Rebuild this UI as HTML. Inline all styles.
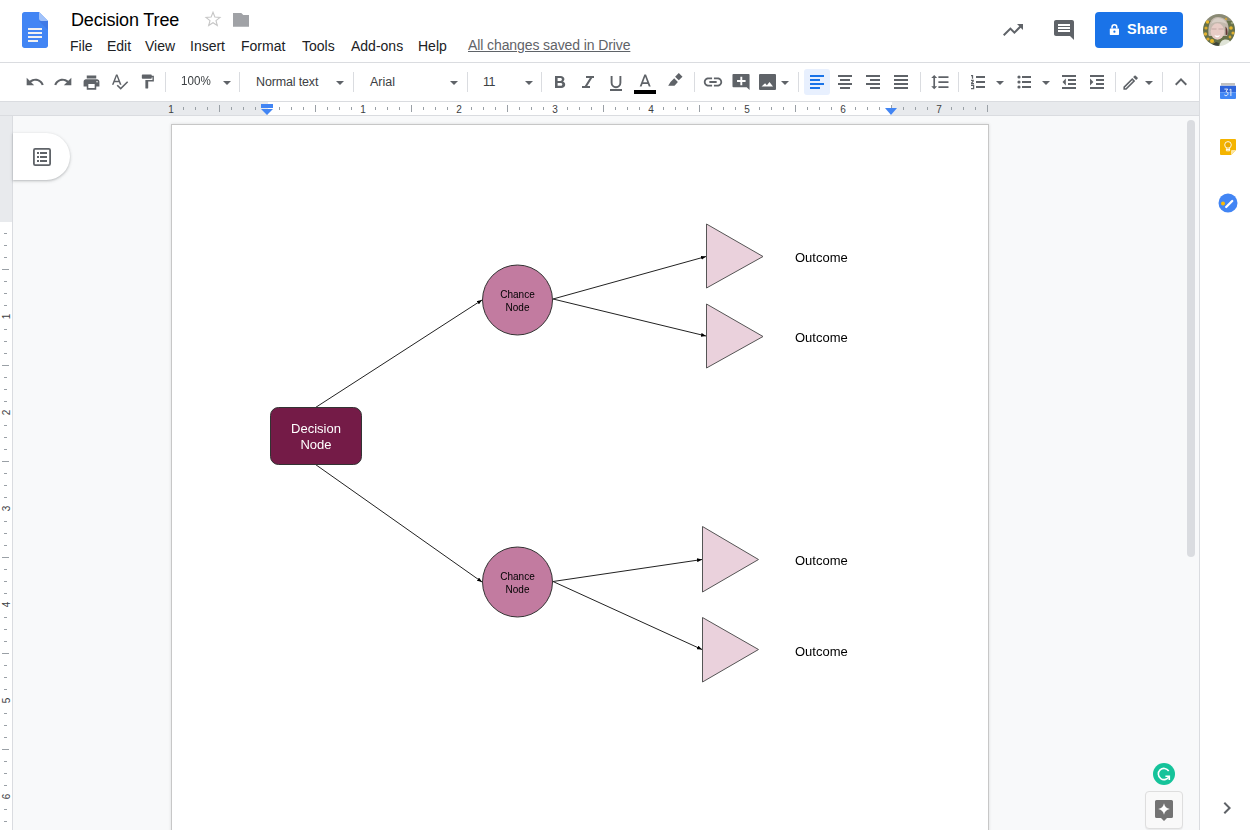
<!DOCTYPE html>
<html><head><meta charset="utf-8"><title>Decision Tree</title><style>
*{margin:0;padding:0;box-sizing:border-box}
html,body{width:1250px;height:830px;overflow:hidden;background:#fff;font-family:"Liberation Sans",sans-serif;color:#202124}
.a{position:absolute}
svg{display:block;position:absolute}
.hl{position:absolute;height:1px;background:#dadce0}
.menu{position:absolute;top:38px;font-size:14px;color:#202124;line-height:16px;white-space:nowrap}
.sep{position:absolute;top:72px;width:1px;height:20px;background:#dadce0}
.dd{position:absolute;top:81px;width:0;height:0;border-left:4px solid transparent;border-right:4px solid transparent;border-top:4px solid #5f6368}
.tb{position:absolute;top:74px;font-size:12.5px;color:#3c4043;line-height:14px;white-space:nowrap}
.rn{position:absolute;font-size:10px;color:#3c4043;line-height:11px;width:12px;text-align:center}
.tk{position:absolute;width:1px;background:#9aa0a6}
.vtk{position:absolute;height:1px;background:#9aa0a6}
.dg{position:absolute;white-space:nowrap;text-align:center;will-change:transform}
</style></head><body>
<div class="hl" style="left:0;top:62px;width:1250px"></div>
<svg style="left:22px;top:12px" width="26" height="36" viewBox="0 0 26 36">
<path fill="#4285f4" d="M2.5 0H17l9 9v24.5c0 1.4-1.1 2.5-2.5 2.5h-21C1.1 36 0 34.9 0 33.5v-31C0 1.1 1.1 0 2.5 0z"/>
<path fill="#a1c2fa" d="M17 0l9 9h-6.5C18.1 9 17 7.9 17 6.5z"/>
<path fill="#3d6fd8" opacity=".5" d="M17 9l9 9V9z"/>
<rect fill="#f1f1f1" x="6" y="16" width="14" height="2"/>
<rect fill="#f1f1f1" x="6" y="20" width="14" height="2"/>
<rect fill="#f1f1f1" x="6" y="24" width="14" height="2"/>
<rect fill="#f1f1f1" x="6" y="28" width="10" height="2"/>
</svg>
<div class="a" style="left:71px;top:9px;font-size:18px;line-height:22px;color:#000;letter-spacing:-0.15px;white-space:nowrap">Decision Tree</div>
<svg style="left:0;top:0" width="260" height="40" viewBox="0 0 260 40"><path fill="none" stroke="#c6c6c6" stroke-width="1.1" stroke-linejoin="miter" d="M213.00 12.20 L214.85 17.05 L220.0 17.36 L216.0 20.65 L217.3 25.5 L213.00 22.7 L208.7 25.5 L210.0 20.65 L206.0 17.36 L211.15 17.05Z"/><path fill="#a0a2a6" d="M233 13h8.3l2 2.1H249v11.7H233z"/></svg>
<div class="menu" style="left:70px">File</div>
<div class="menu" style="left:107px">Edit</div>
<div class="menu" style="left:145px">View</div>
<div class="menu" style="left:190px">Insert</div>
<div class="menu" style="left:241px">Format</div>
<div class="menu" style="left:302px">Tools</div>
<div class="menu" style="left:351px">Add-ons</div>
<div class="menu" style="left:418px">Help</div>
<div class="menu" style="left:468px;top:37px;color:#5f6368;text-decoration:underline;letter-spacing:-0.1px">All changes saved in Drive</div>
<svg style="left:1001px;top:18px" width="24" height="24" viewBox="0 0 24 24"><path fill="#5f6368" d="M16 6l2.29 2.29-4.88 4.88-4-4L2 16.59 3.41 18l6-6 4 4 6.3-6.29L22 12V6z"/></svg>
<svg style="left:1052px;top:18px" width="24" height="24" viewBox="0 0 24 24"><path fill="#5f6368" d="M21.99 4c0-1.1-.89-2-1.99-2H4c-1.1 0-2 .9-2 2v12c0 1.1.9 2 2 2h14l4 4-.01-18zM18 14H6v-2h12v2zm0-3H6V9h12v2zm0-3H6V6h12v2z"/></svg>
<div class="a" style="left:1095px;top:12px;width:88px;height:36px;background:#1a73e8;border-radius:4px"></div>
<svg style="left:1109px;top:23px" width="12" height="13" viewBox="0 0 12 13"><path fill="none" stroke="#fff" stroke-width="1.5" d="M3 5.6V4.2a2.4 2.4 0 0 1 4.8 0V5.6"/><path fill="#fff" d="M1.4 5.5h8a.6.6 0 0 1 .6.6v5.2a.6.6 0 0 1-.6.6h-8a.6.6 0 0 1-.6-.6V6.1a.6.6 0 0 1 .6-.6z"/><circle cx="5.4" cy="8.7" r="1.1" fill="#1a73e8"/></svg>
<div class="a" style="left:1127px;top:21px;font-size:14.5px;line-height:17px;font-weight:bold;color:#fff">Share</div>
<svg style="left:1203px;top:14px" width="32" height="32" viewBox="0 0 32 32">
<defs><clipPath id="cc"><circle cx="16" cy="16" r="16"/></clipPath><filter id="bl" x="-10%" y="-10%" width="120%" height="120%"><feGaussianBlur stdDeviation="0.7"/></filter></defs>
<g clip-path="url(#cc)"><g filter="url(#bl)">
<rect x="-2" y="-2" width="36" height="36" fill="#66704a"/>
<rect x="-2" y="-2" width="36" height="9" fill="#8a8a74"/>
<circle cx="4.5" cy="8" r="1.7" fill="#e7b52a"/><circle cx="3" cy="14" r="1.6" fill="#dba92a"/><circle cx="2.5" cy="20" r="1.7" fill="#e3b230"/>
<circle cx="5" cy="25" r="1.6" fill="#d9a82c"/><circle cx="9" cy="27" r="2" fill="#e9ba2c"/><circle cx="12" cy="29.5" r="1.5" fill="#d6a526"/>
<circle cx="28" cy="14" r="1.8" fill="#e6b52c"/><circle cx="30" cy="19" r="1.6" fill="#e0b030"/><circle cx="27" cy="23" r="1.4" fill="#d9a82a"/>
<circle cx="23" cy="5" r="1.3" fill="#caa040"/><circle cx="29" cy="9" r="1.3" fill="#9aa07a"/>
<path fill="#c4b9ae" d="M5.5 21C4.5 10 8 3 15 3s10.5 5 10.5 11c0 3-.5 6-1.5 8H6z"/>
<path fill="#d8cfc6" d="M8 10c1.5-4 4-6 7-6 4 0 7 2 9 6-3-1.5-6-2-9-2-2.5 0-5 .5-7 2z"/>
<ellipse cx="14.5" cy="17.5" rx="6.8" ry="8.3" fill="#e8ccc6"/>
<path fill="#b89e98" d="M8.5 14.5h5v.9h-5zM15.5 14.5h5v.9h-5z" opacity=".8"/>
<path fill="#fff" d="M11.5 21c1.5 1 4 1 5.5 0-.5 1.6-1.6 2.3-2.8 2.3s-2.2-.7-2.7-2.3z"/>
<path fill="#5e3630" d="M22.5 12.5c1.6 1 2.4 4.5 2 8l-1.8.8z"/>
<path fill="#dfe3d6" d="M16 34c.5-6 3-8.5 7-8.5s5.5 3 6 8.5z"/>
<path fill="#3e4438" d="M9 34c.5-4 2-6 4-6l3 1-1 5z"/>
</g></g></svg>
<div class="hl" style="left:0;top:101px;width:1250px"></div>
<svg style="left:25px;top:72px" width="20" height="20" viewBox="0 0 24 24"><path fill="#5f6368" d="M12.5 8c-2.65 0-5.05.99-6.9 2.6L2 7v9h9l-3.62-3.62c1.39-1.16 3.16-1.88 5.12-1.88 3.54 0 6.55 2.31 7.6 5.5l2.37-.78C21.08 11.03 17.15 8 12.5 8z"/></svg>
<svg style="left:53px;top:72px" width="20" height="20" viewBox="0 0 24 24"><path fill="#5f6368" d="M18.4 10.6C16.55 8.99 14.15 8 11.5 8c-4.65 0-8.58 3.03-9.96 7.22L3.9 16c1.05-3.19 4.05-5.5 7.6-5.5 1.95 0 3.73.72 5.12 1.88L13 16h9V7l-3.6 3.6z"/></svg>
<svg style="left:81.5px;top:72.5px" width="19" height="19" viewBox="0 0 24 24"><path fill="#5f6368" d="M19 8H5c-1.66 0-3 1.34-3 3v6h4v4h12v-4h4v-6c0-1.66-1.34-3-3-3zm-3 11H8v-5h8v5zm3-7c-.55 0-1-.45-1-1s.45-1 1-1 1 .45 1 1-.45 1-1 1zm-1-9H6v4h12V3z"/></svg>
<svg style="left:110px;top:72px" width="19" height="19" viewBox="0 0 24 24"><path fill="#5f6368" d="M12.45 16h2.09L9.43 3H7.57L2.46 16h2.09l1.12-3h5.64l1.14 3zm-6.02-5L8.5 5.48 10.57 11H6.43zm15.16.59l-8.09 8.09L9.83 16l-1.41 1.41 5.09 5.09L23 13l-1.41-1.41z"/></svg>
<svg style="left:139px;top:73px" width="17" height="17" viewBox="0 0 24 24"><path fill="#5f6368" d="M18 4V3c0-.55-.45-1-1-1H5c-.55 0-1 .45-1 1v4c0 .55.45 1 1 1h12c.55 0 1-.45 1-1V6h1v4H9v11c0 .55.45 1 1 1h2c.55 0 1-.45 1-1v-9h8V4h-3z"/></svg>
<div class="sep" style="left:165px"></div>
<div class="tb" style="left:181px;transform:scaleX(0.93);transform-origin:0 0">100%</div>
<div class="dd" style="left:223px"></div>
<div class="sep" style="left:239px"></div>
<div class="tb" style="left:256px;top:75px;letter-spacing:-0.15px">Normal text</div>
<div class="dd" style="left:336px"></div>
<div class="sep" style="left:353px"></div>
<div class="tb" style="left:370px;top:75px">Arial</div>
<div class="dd" style="left:450px"></div>
<div class="sep" style="left:467px"></div>
<div class="tb" style="left:483px;top:75px;letter-spacing:-0.5px">11</div>
<div class="dd" style="left:525px"></div>
<div class="sep" style="left:541px"></div>
<svg style="left:555px;top:76px" width="11" height="12" viewBox="0 0 11 12"><path fill="#5f6368" fill-rule="evenodd" d="M0 0h5.6c2.2 0 3.8 1.4 3.8 3.1 0 1.1-.6 2-1.4 2.5 1.3.5 2.2 1.6 2.2 3.1 0 1.9-1.6 3.3-3.9 3.3H0zM2.6 2.1v2.8h2.8c.9 0 1.5-.6 1.5-1.4S6.3 2.1 5.4 2.1zM2.6 7v2.8h3.1c.9 0 1.6-.6 1.6-1.4S6.6 7 5.7 7z"/></svg>
<svg style="left:582px;top:76px" width="12" height="12" viewBox="0 0 12 12"><path fill="#5f6368" d="M4 0h8v2H4zM0 10h8v2H0zM7.8 2h2.4L5.2 10H2.8z"/></svg>
<svg style="left:610px;top:76px" width="12" height="15" viewBox="0 0 12 15"><path fill="none" stroke="#5f6368" stroke-width="1.9" d="M1.6 0V6.8a4.4 4.4 0 0 0 8.8 0V0"/><rect x="0" y="13" width="12" height="2" fill="#5f6368"/></svg>
<svg style="left:634.5px;top:71.5px" width="20.4" height="20.4" viewBox="0 0 24 24"><path fill="#5f6368" d="M11 3L5.5 17h2.25l1.12-3h6.25l1.12 3h2.25L13 3h-2zm-1.38 9L12 5.67 14.38 12H9.62z"/></svg>
<div class="a" style="left:634px;top:90px;width:22px;height:4px;background:#000"></div>
<svg style="left:664px;top:70px" width="24" height="20" viewBox="0 0 24 20"><path fill="#5f6368" d="M14.8 3.1L18.5 6.7L14.8 10.3L11.1 6.7ZM10.2 8.2L13.9 11.9L10.5 15.7L4.2 15.7L6.5 12Z"/></svg>
<div class="sep" style="left:694px"></div>
<svg style="left:702px;top:71px" width="22" height="22" viewBox="0 0 24 24"><path fill="#5f6368" d="M3.9 12c0-1.71 1.39-3.1 3.1-3.1h4V7H7c-2.76 0-5 2.24-5 5s2.24 5 5 5h4v-1.9H7c-1.71 0-3.1-1.39-3.1-3.1zM8 13h8v-2H8v2zm9-6h-4v1.9h4c1.71 0 3.1 1.39 3.1 3.1s-1.39 3.1-3.1 3.1h-4V17h4c2.76 0 5-2.24 5-5s-2.24-5-5-5z"/></svg>
<svg style="left:732px;top:72px" width="19" height="19" viewBox="0 0 20 20"><path fill="#5f6368" d="M1.5 2h16a1 1 0 0 1 1 1v16l-3-3h-14a1 1 0 0 1-1-1V3a1 1 0 0 1 1-1zM8.8 5v3.5H5.3v2h3.5V14h2v-3.5h3.5v-2h-3.5V5z"/></svg>
<svg style="left:759px;top:74px" width="18" height="16" viewBox="0 0 18 16"><path fill="#5f6368" d="M1 0h15a1 1 0 0 1 1 1v14a1 1 0 0 1-1 1H1a1 1 0 0 1-1-1V1a1 1 0 0 1 1-1zM2.5 12.5h11.5l-3.5-4.5-2.6 3.2-1.8-2z"/></svg>
<div class="dd" style="left:781px"></div>
<div class="sep" style="left:798px"></div>
<div class="a" style="left:804px;top:69px;width:26px;height:26px;background:#e8f0fe;border-radius:3px"></div>
<div class="a" style="left:810px;top:75px;width:14px;height:2px;background:#1a73e8"></div>
<div class="a" style="left:810px;top:79px;width:10px;height:2px;background:#1a73e8"></div>
<div class="a" style="left:810px;top:83px;width:14px;height:2px;background:#1a73e8"></div>
<div class="a" style="left:810px;top:87px;width:10px;height:2px;background:#1a73e8"></div>
<div class="a" style="left:838px;top:75px;width:14px;height:2px;background:#5f6368"></div>
<div class="a" style="left:840px;top:79px;width:10px;height:2px;background:#5f6368"></div>
<div class="a" style="left:838px;top:83px;width:14px;height:2px;background:#5f6368"></div>
<div class="a" style="left:840px;top:87px;width:10px;height:2px;background:#5f6368"></div>
<div class="a" style="left:866px;top:75px;width:14px;height:2px;background:#5f6368"></div>
<div class="a" style="left:870px;top:79px;width:10px;height:2px;background:#5f6368"></div>
<div class="a" style="left:866px;top:83px;width:14px;height:2px;background:#5f6368"></div>
<div class="a" style="left:870px;top:87px;width:10px;height:2px;background:#5f6368"></div>
<div class="a" style="left:894px;top:75px;width:14px;height:2px;background:#5f6368"></div>
<div class="a" style="left:894px;top:79px;width:14px;height:2px;background:#5f6368"></div>
<div class="a" style="left:894px;top:83px;width:14px;height:2px;background:#5f6368"></div>
<div class="a" style="left:894px;top:87px;width:14px;height:2px;background:#5f6368"></div>
<div class="sep" style="left:920px"></div>
<svg style="left:929.7px;top:71.9px" width="20.16" height="20.16" viewBox="0 0 24 24"><path fill="#5f6368" d="M6 7h2.5L5 3.5 1.5 7H4v10H1.5L5 20.5 8.5 17H6V7zm4-2v2h12V5H10zm0 14h12v-2H10v2zm0-6h12v-2H10v2z"/></svg>
<div class="sep" style="left:958px"></div>
<div class="a" style="left:976px;top:76px;width:9px;height:2px;background:#5f6368"></div><div class="a" style="left:976px;top:81px;width:9px;height:2px;background:#5f6368"></div><div class="a" style="left:976px;top:86px;width:9px;height:2px;background:#5f6368"></div>
<svg style="left:970px;top:74px" width="6" height="16" viewBox="0 0 6 16"><path fill="none" stroke="#5f6368" stroke-width="1.25" d="M1 1.5h1.9M2.5 1.1V4.8M1 6.4h2.8M3.4 6.8L1.5 9.2M1 9.6h3M1 11.4h3.2M3.6 10.8v4.3M1 14.5h3.2"/></svg>
<div class="dd" style="left:996px"></div>
<div class="a" style="left:1022px;top:76px;width:9px;height:2px;background:#5f6368"></div><div class="a" style="left:1022px;top:81px;width:9px;height:2px;background:#5f6368"></div><div class="a" style="left:1022px;top:86px;width:9px;height:2px;background:#5f6368"></div>
<svg style="left:1016px;top:74px" width="6" height="16" viewBox="0 0 6 16"><circle cx="3" cy="3" r="1.6" fill="#5f6368"/><circle cx="3" cy="8" r="1.6" fill="#5f6368"/><circle cx="3" cy="13" r="1.6" fill="#5f6368"/></svg>
<div class="dd" style="left:1042px"></div>
<div class="a" style="left:1062px;top:75px;width:14px;height:2px;background:#5f6368"></div><div class="a" style="left:1068px;top:79px;width:8px;height:2px;background:#5f6368"></div><div class="a" style="left:1068px;top:83px;width:8px;height:2px;background:#5f6368"></div><div class="a" style="left:1062px;top:87px;width:14px;height:2px;background:#5f6368"></div>
<svg style="left:1062px;top:78px" width="5" height="8" viewBox="0 0 5 8"><path fill="#5f6368" d="M0.5 4L3.8 0.6V7.4z"/></svg>
<div class="a" style="left:1090px;top:75px;width:14px;height:2px;background:#5f6368"></div><div class="a" style="left:1096px;top:79px;width:8px;height:2px;background:#5f6368"></div><div class="a" style="left:1096px;top:83px;width:8px;height:2px;background:#5f6368"></div><div class="a" style="left:1090px;top:87px;width:14px;height:2px;background:#5f6368"></div>
<svg style="left:1090px;top:78px" width="5" height="8" viewBox="0 0 5 8"><path fill="#5f6368" d="M0 0.6L3.4 4L0 7.4z"/></svg>
<div class="sep" style="left:1115px"></div>
<svg style="left:1121.4px;top:72.6px" width="19.2" height="19.2" viewBox="0 0 24 24"><path fill="#5f6368" d="M14.06 9.02l.92.92L5.92 19H5v-.92l9.06-9.06M17.66 3c-.25 0-.51.1-.7.29l-1.83 1.83 3.75 3.75 1.83-1.83c.39-.39.39-1.02 0-1.41l-2.34-2.34c-.2-.2-.45-.29-.71-.29zm-3.6 3.19L3 17.25V21h3.75L17.81 9.94l-3.75-3.75z"/></svg>
<div class="dd" style="left:1145px"></div>
<div class="sep" style="left:1162px"></div>
<svg style="left:1169px;top:70px" width="24" height="24" viewBox="0 0 24 24"><path fill="#5f6368" d="M12 8l-6 6 1.41 1.41L12 10.83l4.59 4.58L18 14z"/></svg>
<div class="a" style="left:0;top:102px;width:1199px;height:13px;background:#e8eaed"></div>
<div class="a" style="left:268px;top:102px;width:624px;height:13px;background:#fff"></div>
<div class="hl" style="left:0;top:115px;width:1199px"></div>
<div class="a" style="left:13px;top:116px;width:1186px;height:714px;background:#f8f9fa"></div>
<div class="a" style="left:0;top:116px;width:12px;height:106px;background:#e8eaed"></div>
<div class="a" style="left:0;top:222px;width:12px;height:608px;background:#fff"></div>
<div class="a" style="left:12px;top:116px;width:1px;height:714px;background:#dadce0"></div>
<div class="rn" style="left:165px;top:104px">1</div>
<div class="tk" style="left:183px;top:107px;height:3px"></div>
<div class="tk" style="left:195px;top:107px;height:3px"></div>
<div class="tk" style="left:207px;top:107px;height:3px"></div>
<div class="tk" style="left:219px;top:105px;height:7px"></div>
<div class="tk" style="left:231px;top:107px;height:3px"></div>
<div class="tk" style="left:243px;top:107px;height:3px"></div>
<div class="tk" style="left:255px;top:107px;height:3px"></div>
<div class="tk" style="left:279px;top:107px;height:3px"></div>
<div class="tk" style="left:291px;top:107px;height:3px"></div>
<div class="tk" style="left:303px;top:107px;height:3px"></div>
<div class="tk" style="left:315px;top:105px;height:7px"></div>
<div class="tk" style="left:327px;top:107px;height:3px"></div>
<div class="tk" style="left:339px;top:107px;height:3px"></div>
<div class="tk" style="left:351px;top:107px;height:3px"></div>
<div class="rn" style="left:357px;top:104px">1</div>
<div class="tk" style="left:375px;top:107px;height:3px"></div>
<div class="tk" style="left:387px;top:107px;height:3px"></div>
<div class="tk" style="left:399px;top:107px;height:3px"></div>
<div class="tk" style="left:411px;top:105px;height:7px"></div>
<div class="tk" style="left:423px;top:107px;height:3px"></div>
<div class="tk" style="left:435px;top:107px;height:3px"></div>
<div class="tk" style="left:447px;top:107px;height:3px"></div>
<div class="rn" style="left:453px;top:104px">2</div>
<div class="tk" style="left:471px;top:107px;height:3px"></div>
<div class="tk" style="left:483px;top:107px;height:3px"></div>
<div class="tk" style="left:495px;top:107px;height:3px"></div>
<div class="tk" style="left:507px;top:105px;height:7px"></div>
<div class="tk" style="left:519px;top:107px;height:3px"></div>
<div class="tk" style="left:531px;top:107px;height:3px"></div>
<div class="tk" style="left:543px;top:107px;height:3px"></div>
<div class="rn" style="left:549px;top:104px">3</div>
<div class="tk" style="left:567px;top:107px;height:3px"></div>
<div class="tk" style="left:579px;top:107px;height:3px"></div>
<div class="tk" style="left:591px;top:107px;height:3px"></div>
<div class="tk" style="left:603px;top:105px;height:7px"></div>
<div class="tk" style="left:615px;top:107px;height:3px"></div>
<div class="tk" style="left:627px;top:107px;height:3px"></div>
<div class="tk" style="left:639px;top:107px;height:3px"></div>
<div class="rn" style="left:645px;top:104px">4</div>
<div class="tk" style="left:663px;top:107px;height:3px"></div>
<div class="tk" style="left:675px;top:107px;height:3px"></div>
<div class="tk" style="left:687px;top:107px;height:3px"></div>
<div class="tk" style="left:699px;top:105px;height:7px"></div>
<div class="tk" style="left:711px;top:107px;height:3px"></div>
<div class="tk" style="left:723px;top:107px;height:3px"></div>
<div class="tk" style="left:735px;top:107px;height:3px"></div>
<div class="rn" style="left:741px;top:104px">5</div>
<div class="tk" style="left:759px;top:107px;height:3px"></div>
<div class="tk" style="left:771px;top:107px;height:3px"></div>
<div class="tk" style="left:783px;top:107px;height:3px"></div>
<div class="tk" style="left:795px;top:105px;height:7px"></div>
<div class="tk" style="left:807px;top:107px;height:3px"></div>
<div class="tk" style="left:819px;top:107px;height:3px"></div>
<div class="tk" style="left:831px;top:107px;height:3px"></div>
<div class="rn" style="left:837px;top:104px">6</div>
<div class="tk" style="left:855px;top:107px;height:3px"></div>
<div class="tk" style="left:867px;top:107px;height:3px"></div>
<div class="tk" style="left:879px;top:107px;height:3px"></div>
<div class="tk" style="left:891px;top:105px;height:7px"></div>
<div class="tk" style="left:903px;top:107px;height:3px"></div>
<div class="tk" style="left:915px;top:107px;height:3px"></div>
<div class="tk" style="left:927px;top:107px;height:3px"></div>
<div class="rn" style="left:933px;top:104px">7</div>
<div class="tk" style="left:951px;top:107px;height:3px"></div>
<div class="tk" style="left:963px;top:107px;height:3px"></div>
<div class="tk" style="left:975px;top:107px;height:3px"></div>
<div class="tk" style="left:987px;top:105px;height:7px"></div>
<div class="a" style="left:261px;top:104px;width:12px;height:4px;background:#4285f4"></div>
<svg style="left:261px;top:109px" width="12" height="6" viewBox="0 0 12 6"><path fill="#4285f4" d="M0 0h12L6 6z"/></svg>
<svg style="left:885px;top:108px" width="12" height="7" viewBox="0 0 12 7"><path fill="#4285f4" d="M0 0h12L6 7z"/></svg>
<div class="vtk" style="left:4px;top:233px;width:3px"></div>
<div class="vtk" style="left:4px;top:245px;width:3px"></div>
<div class="vtk" style="left:4px;top:257px;width:3px"></div>
<div class="vtk" style="left:2px;top:269px;width:7px"></div>
<div class="vtk" style="left:4px;top:281px;width:3px"></div>
<div class="vtk" style="left:4px;top:293px;width:3px"></div>
<div class="vtk" style="left:4px;top:305px;width:3px"></div>
<div class="rn" style="left:0px;top:311px;transform:rotate(-90deg)">1</div>
<div class="vtk" style="left:4px;top:329px;width:3px"></div>
<div class="vtk" style="left:4px;top:341px;width:3px"></div>
<div class="vtk" style="left:4px;top:353px;width:3px"></div>
<div class="vtk" style="left:2px;top:365px;width:7px"></div>
<div class="vtk" style="left:4px;top:377px;width:3px"></div>
<div class="vtk" style="left:4px;top:389px;width:3px"></div>
<div class="vtk" style="left:4px;top:401px;width:3px"></div>
<div class="rn" style="left:0px;top:407px;transform:rotate(-90deg)">2</div>
<div class="vtk" style="left:4px;top:425px;width:3px"></div>
<div class="vtk" style="left:4px;top:437px;width:3px"></div>
<div class="vtk" style="left:4px;top:449px;width:3px"></div>
<div class="vtk" style="left:2px;top:461px;width:7px"></div>
<div class="vtk" style="left:4px;top:473px;width:3px"></div>
<div class="vtk" style="left:4px;top:485px;width:3px"></div>
<div class="vtk" style="left:4px;top:497px;width:3px"></div>
<div class="rn" style="left:0px;top:503px;transform:rotate(-90deg)">3</div>
<div class="vtk" style="left:4px;top:521px;width:3px"></div>
<div class="vtk" style="left:4px;top:533px;width:3px"></div>
<div class="vtk" style="left:4px;top:545px;width:3px"></div>
<div class="vtk" style="left:2px;top:557px;width:7px"></div>
<div class="vtk" style="left:4px;top:569px;width:3px"></div>
<div class="vtk" style="left:4px;top:581px;width:3px"></div>
<div class="vtk" style="left:4px;top:593px;width:3px"></div>
<div class="rn" style="left:0px;top:599px;transform:rotate(-90deg)">4</div>
<div class="vtk" style="left:4px;top:617px;width:3px"></div>
<div class="vtk" style="left:4px;top:629px;width:3px"></div>
<div class="vtk" style="left:4px;top:641px;width:3px"></div>
<div class="vtk" style="left:2px;top:653px;width:7px"></div>
<div class="vtk" style="left:4px;top:665px;width:3px"></div>
<div class="vtk" style="left:4px;top:677px;width:3px"></div>
<div class="vtk" style="left:4px;top:689px;width:3px"></div>
<div class="rn" style="left:0px;top:695px;transform:rotate(-90deg)">5</div>
<div class="vtk" style="left:4px;top:713px;width:3px"></div>
<div class="vtk" style="left:4px;top:725px;width:3px"></div>
<div class="vtk" style="left:4px;top:737px;width:3px"></div>
<div class="vtk" style="left:2px;top:749px;width:7px"></div>
<div class="vtk" style="left:4px;top:761px;width:3px"></div>
<div class="vtk" style="left:4px;top:773px;width:3px"></div>
<div class="vtk" style="left:4px;top:785px;width:3px"></div>
<div class="rn" style="left:0px;top:791px;transform:rotate(-90deg)">6</div>
<div class="vtk" style="left:4px;top:809px;width:3px"></div>
<div class="vtk" style="left:4px;top:821px;width:3px"></div>
<div class="a" style="left:13px;top:133px;width:57px;height:47px;background:#fff;border-radius:0 24px 24px 0;box-shadow:0 1px 2px rgba(60,64,67,.22),0 1px 3px 1px rgba(60,64,67,.1)"></div>
<svg style="left:30px;top:145px" width="24" height="24" viewBox="0 0 24 24"><rect x="3.9" y="3.9" width="16.2" height="16.2" rx="1.3" fill="none" stroke="#5f6368" stroke-width="1.8"/><path fill="#5f6368" d="M7 7h2v2H7zM7 11h2v2H7zM7 15h2v2H7zM10 7h7v2h-7zM10 11h7v2h-7zM10 15h7v2h-7z"/></svg>
<div class="a" style="left:171px;top:124px;width:818px;height:720px;background:#fff;border:1px solid #c7c7c7;box-shadow:0 0 3px rgba(0,0,0,.12)"></div>
<svg style="left:0;top:0" width="1250" height="830" viewBox="0 0 1250 830">
<defs><marker id="ar" markerWidth="5" markerHeight="4" refX="5" refY="2" orient="auto" markerUnits="userSpaceOnUse"><path d="M0 0L5 2L0 4z" fill="#000"/></marker></defs>
<g stroke="#222" stroke-width="1" fill="none">
<line x1="315.5" y1="407.5" x2="482" y2="300" marker-end="url(#ar)"/>
<line x1="315.5" y1="464.5" x2="482" y2="582" marker-end="url(#ar)"/>
<line x1="553" y1="299" x2="706" y2="256.5" marker-end="url(#ar)"/>
<line x1="553" y1="299" x2="706" y2="336" marker-end="url(#ar)"/>
<line x1="553" y1="581.5" x2="702" y2="559.5" marker-end="url(#ar)"/>
<line x1="553" y1="581.5" x2="702" y2="649.5" marker-end="url(#ar)"/>
</g>
<rect x="270.5" y="407.5" width="91" height="57" rx="8" fill="#741b47" stroke="#333" stroke-width="1"/>
<circle cx="517.5" cy="300" r="35" fill="#c27ba0" stroke="#333" stroke-width="1"/>
<circle cx="517.5" cy="582" r="35" fill="#c27ba0" stroke="#333" stroke-width="1"/>
<path d="M706.5 224L763 256.5L706.5 288z" fill="#ead1dc" stroke="#555" stroke-width="1"/>
<path d="M706.5 304L763 336.5L706.5 368z" fill="#ead1dc" stroke="#555" stroke-width="1"/>
<path d="M702.5 526.5L758.5 559.5L702.5 592z" fill="#ead1dc" stroke="#555" stroke-width="1"/>
<path d="M702.5 617.5L758.5 649.5L702.5 682z" fill="#ead1dc" stroke="#555" stroke-width="1"/>
</svg>
<div class="dg" style="left:270px;top:421px;width:92px;font-size:13px;line-height:15.5px;color:#fff">Decision<br>Node</div>
<div class="dg" style="left:482px;top:289px;width:71px;font-size:10px;line-height:12.5px;color:#000">Chance<br>Node</div>
<div class="dg" style="left:482px;top:571px;width:71px;font-size:10px;line-height:12.5px;color:#000">Chance<br>Node</div>
<div class="dg" style="left:795px;top:250px;font-size:13px;line-height:15px;color:#000">Outcome</div>
<div class="dg" style="left:795px;top:330px;font-size:13px;line-height:15px;color:#000">Outcome</div>
<div class="dg" style="left:795px;top:553px;font-size:13px;line-height:15px;color:#000">Outcome</div>
<div class="dg" style="left:795px;top:644px;font-size:13px;line-height:15px;color:#000">Outcome</div>
<div class="a" style="left:1187px;top:120px;width:8px;height:437px;background:#dadce0;border-radius:4px"></div>
<svg style="left:1153px;top:763px" width="22" height="22" viewBox="0 0 22 22"><circle cx="11" cy="11" r="11" fill="#15c39a"/>
<path d="M15.7 8A5.6 5.6 0 1 0 16.1 13.2" fill="none" stroke="#fff" stroke-width="1.6"/><path d="M12.4 13.3h3.9v3.6" fill="none" stroke="#fff" stroke-width="1.6"/></svg>
<div class="a" style="left:1145px;top:791px;width:38px;height:38px;background:#f9f9f9;border:1px solid #dedede;border-radius:4px;box-shadow:0 1px 1px rgba(0,0,0,.06)"></div>
<svg style="left:1155px;top:800px" width="18" height="22" viewBox="0 0 18 22"><path fill="#737373" d="M1.5 0h15A1.5 1.5 0 0 1 18 1.5v15A1.5 1.5 0 0 1 16.5 18H12l-3 3-3-3H1.5A1.5 1.5 0 0 1 0 16.5v-15A1.5 1.5 0 0 1 1.5 0z"/>
<path fill="#fff" d="M9 3.2C9.7 6.6 11.4 8.3 14.8 9 11.4 9.7 9.7 11.4 9 14.8 8.3 11.4 6.6 9.7 3.2 9 6.6 8.3 8.3 6.6 9 3.2z"/></svg>
<div class="a" style="left:1199px;top:63px;width:1px;height:767px;background:#dadce0"></div>
<div class="a" style="left:1200px;top:63px;width:50px;height:767px;background:#fff"></div>
<svg style="left:1220px;top:83px" width="16" height="16" viewBox="0 0 16 16">
<rect x="1" y="0" width="14" height="2.6" fill="#c2c2c0"/><rect x="0" y="2.8" width="16" height="6.4" fill="#2f65da"/>
<path d="M0 9.2h16V15a1 1 0 0 1-1 1H1a1 1 0 0 1-1-1z" fill="#4187f5"/>
<path d="M4.4 6.1H7.7L6 8.6A2.05 2.05 0 1 1 4.3 11.9M9.4 7l1.5-.9V13" fill="none" stroke="#f2f2f2" stroke-width=".95"/></svg>
<svg style="left:1220px;top:139px" width="16" height="16" viewBox="0 0 16 16">
<path fill="#f4b400" d="M1 0h14a1 1 0 0 1 1 1v10l-5 5H1a1 1 0 0 1-1-1V1a1 1 0 0 1 1-1z"/>
<path fill="#fbe5a0" d="M16 11l-5 5v-4a1 1 0 0 1 1-1z"/>
<circle cx="8" cy="5.9" r="3.3" fill="#eaa800" stroke="#fff" stroke-width=".9"/><path d="M6.4 9.2v2.6h3.2V9.2M6.4 10.5h3.2" fill="none" stroke="#fff" stroke-width=".9"/></svg>
<svg style="left:1218px;top:193px" width="20" height="20" viewBox="0 0 20 20">
<circle cx="10" cy="10" r="9.5" fill="#4285f4"/><path d="M8.2 14L14.2 8" stroke="#fff" stroke-width="2.3" stroke-linecap="round"/><circle cx="5" cy="10.5" r="2" fill="#fbbc04"/></svg>
<svg style="left:1215px;top:796px" width="24" height="24" viewBox="0 0 24 24"><path fill="#5f6368" d="M10 6L8.59 7.41 13.17 12l-4.58 4.59L10 18l6-6z"/></svg>
</body></html>
